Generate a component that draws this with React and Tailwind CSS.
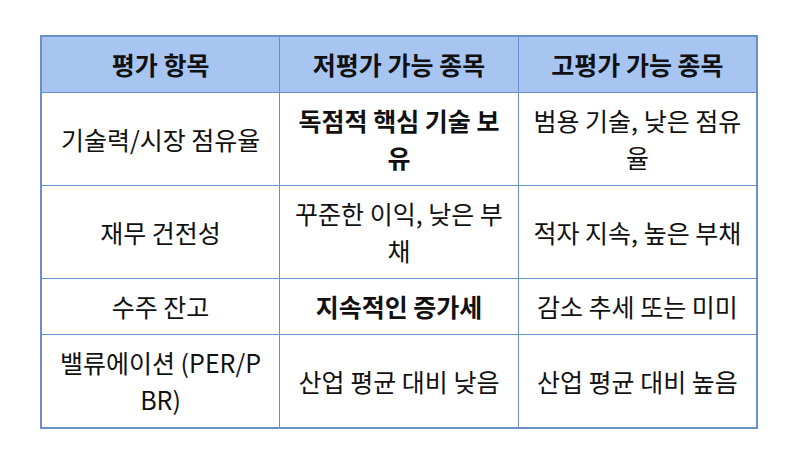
import React from 'react';

const rows = [
  { item: '기술력/시장 점유율', low: '독점적 핵심 기술 보유', lowBold: true, high: '범용 기술, 낮은 점유율' },
  { item: '재무 건전성', low: '꾸준한 이익, 낮은 부채', high: '적자 지속, 높은 부채' },
  { item: '수주 잔고', low: '지속적인 증가세', lowBold: true, high: '감소 추세 또는 미미' },
  { item: '밸류에이션 (PER/P\nBR)', low: '산업 평균 대비 낮음', high: '산업 평균 대비 높음' },
];

const cell = 'border border-[#6b8fc9] px-[9px] py-[9px] text-center align-middle break-all whitespace-pre-line';

const App = () => {
  return (
    <div className="w-[800px] h-[467px] bg-white pt-[35px] pl-[40px] font-['Noto_Sans_CJK_KR','Noto_Sans',sans-serif] text-[25px] leading-[37px] text-[#111]">
      <table className="w-[718px] table-fixed border-collapse border-2 border-[#6b8fc9]">
        <thead>
          <tr className="bg-[#a8c5f1]">
            <th className={cell + ' font-bold'}>평가 항목</th>
            <th className={cell + ' font-bold'}>저평가 가능 종목</th>
            <th className={cell + ' font-bold'}>고평가 가능 종목</th>
          </tr>
        </thead>
        <tbody>
          {rows.map((r) => (
            <tr key={r.item}>
              <td className={cell}>{r.item}</td>
              <td className={cell + (r.lowBold ? ' font-bold' : '')}>{r.low}</td>
              <td className={cell}>{r.high}</td>
            </tr>
          ))}
        </tbody>
      </table>
    </div>
  );
};

export default App;
